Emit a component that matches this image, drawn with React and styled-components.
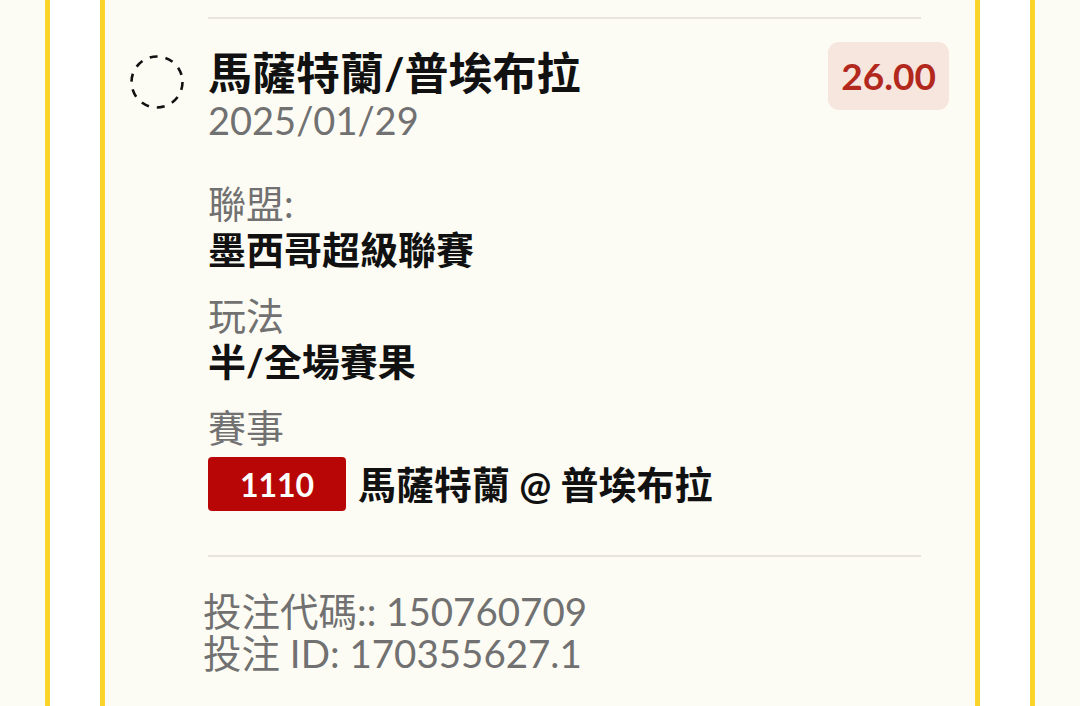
import styled, { createGlobalStyle } from "styled-components";

const GlobalStyle = createGlobalStyle`
  html, body {
    margin: 0;
    padding: 0;
    background: #fdfcf4;
    overflow: hidden;
  }
  body {
    font-family: "Lato", "Noto Sans CJK TC", sans-serif;
  }
`;

const Frame = styled.div`
  margin: 0 45px;
  height: 706px;
  box-sizing: border-box;
  border-left: 5px solid #f9d52b;
  border-right: 5px solid #f9d52b;
  background: #ffffff;
  padding: 0 50px;
`;

const Card = styled.div`
  height: 100%;
  box-sizing: border-box;
  border-left: 5px solid #f9d52b;
  border-right: 5px solid #f9d52b;
  background: #fdfcf4;
  padding: 17px 54px 0 103px;
`;

const Divider = styled.div`
  height: 2px;
  background: #e7e5de;
`;

const Header = styled.div`
  display: flex;
  align-items: flex-start;
  margin-top: 23px;
`;

const Check = styled.svg`
  flex: none;
  width: 54px;
  height: 54px;
  margin: 13px 24px 0 -78px;
`;

const TitleBlock = styled.div`
  flex: 1;
  min-width: 0;
`;

const Title = styled.div`
  font-size: 44px;
  font-weight: 700;
  color: #111;
  line-height: 48px;
  margin-top: 7px;
`;

const Muted = styled.div`
  font-size: 38px;
  color: #717171;
  line-height: 46px;
`;

const Odds = styled.div`
  flex: none;
  margin-right: -28px;
  background: #f6e6de;
  color: #b3281d;
  font-size: 37px;
  font-weight: 700;
  line-height: 68px;
  padding: 0 13px;
  border-radius: 11px;
`;

const Details = styled.div`
  display: flex;
  flex-direction: column;
  gap: 20px;
  margin-top: 37px;
`;

const Field = styled.div`
  display: flex;
  flex-direction: column;
`;

const Value = styled.div`
  font-size: 38px;
  font-weight: 700;
  color: #111;
  line-height: 46px;
`;

const Event = styled.div`
  display: flex;
  align-items: center;
  gap: 12px;
  margin-top: 7px;
`;

const Code = styled.span`
  display: inline-flex;
  align-items: center;
  justify-content: center;
  width: 138px;
  height: 54px;
  border-radius: 4px;
  background: #b80606;
  color: #fff;
  font-size: 32px;
  font-weight: 700;
`;

const BottomDivider = styled(Divider)`
  margin-top: 44px;
`;

const Footer = styled.div`
  margin: 33px 0 0 -5px;
  font-size: 38.5px;
  color: #717171;
  line-height: 42px;
`;

function DashedCircle() {
  return (
    <Check viewBox="0 0 54 54">
      <circle
        cx="27"
        cy="27"
        r="25.5"
        fill="none"
        stroke="#111"
        strokeWidth="2.6"
        strokeDasharray="8 8"
      />
    </Check>
  );
}

export default function App() {
  return (
    <>
      <GlobalStyle />
      <Frame>
        <Card>
          <Divider />
          <Header>
            <DashedCircle />
            <TitleBlock>
              <Title>馬薩特蘭/普埃布拉</Title>
              <Muted>2025/01/29</Muted>
            </TitleBlock>
            <Odds>26.00</Odds>
          </Header>

          <Details>
            <Field>
              <Muted>聯盟:</Muted>
              <Value>墨西哥超級聯賽</Value>
            </Field>
            <Field>
              <Muted>玩法</Muted>
              <Value>半/全場賽果</Value>
            </Field>
            <Field>
              <Muted>賽事</Muted>
              <Event>
                <Code>1110</Code>
                <Value>馬薩特蘭 @ 普埃布拉</Value>
              </Event>
            </Field>
          </Details>

          <BottomDivider />
          <Footer>
            <div>投注代碼:: 150760709</div>
            <div>投注 ID: 170355627.1</div>
          </Footer>
        </Card>
      </Frame>
    </>
  );
}
